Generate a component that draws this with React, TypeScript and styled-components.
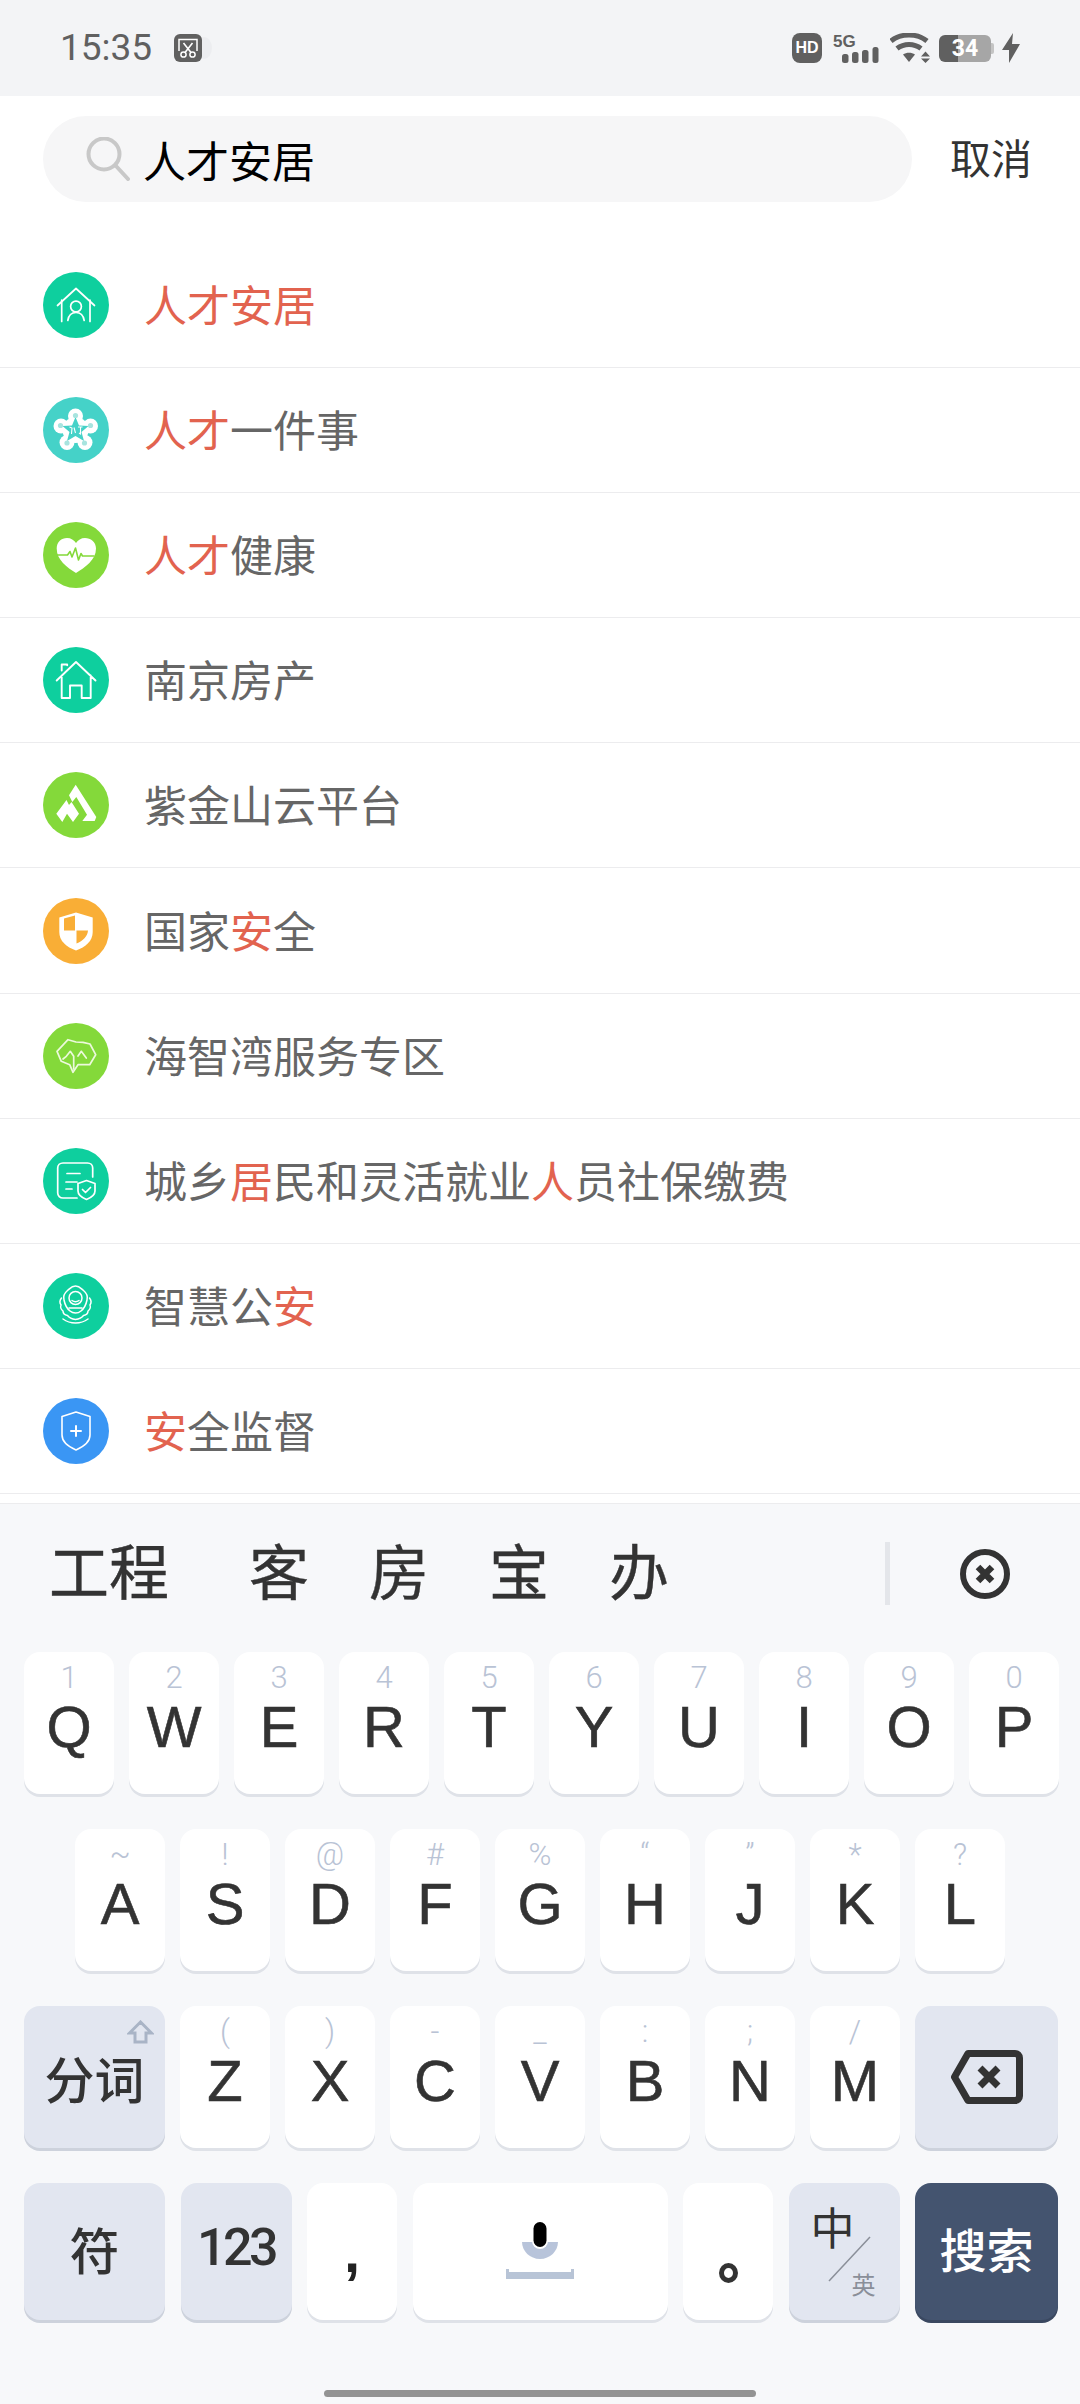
import React from 'react';
import styled, {createGlobalStyle} from 'styled-components';

const CJK = '"Noto Sans CJK SC", "Noto Sans", sans-serif';
const LATIN = '"Liberation Sans", "Noto Sans CJK SC", sans-serif';

const GlobalStyle = createGlobalStyle`
  html, body {
    margin: 0;
    padding: 0;
    background: #fff;
  }

  * {
    box-sizing: border-box;
  }
`;

const Page = styled.div`
  width: 1080px;
  height: 2404px;
  overflow: hidden;
  display: flex;
  flex-direction: column;
  background: #fff;
  font-family: ${CJK};
`;

const StatusBar = styled.div`
  height: 96px;
  flex: none;
  display: flex;
  align-items: center;
  padding: 0 60px;
  background: #f3f4f6;
  color: #606060;
`;

const Time = styled.span`
  font-family: Roboto, sans-serif;
  font-size: 37px;
  line-height: 36px;
  margin-right: 22px;
`;

const StatusRight = styled.div`
  margin-left: auto;
  display: flex;
  align-items: center;
`;

const HdBadge = styled.span`
  width: 30px;
  height: 30px;
  border-radius: 8px;
  background: #606060;
  color: #fff;
  font: bold 16px/30px ${LATIN};
  text-align: center;
  margin-right: 11px;
`;

const Battery = styled.span`
  position: relative;
  width: 52px;
  height: 27px;
  border-radius: 6px;
  margin: 0 11px 0 9px;
  background: linear-gradient(to right, #606060 36%, #a6a6a6 36%);
  color: #fff;
  font: bold 23px/27px Roboto, sans-serif;
  text-align: center;

  &::after {
    content: '';
    position: absolute;
    right: -3px;
    top: 8px;
    width: 3px;
    height: 11px;
    border-radius: 0 2px 2px 0;
    background: #c4c4c4;
  }
`;

const SearchRow = styled.div`
  height: 147px;
  flex: none;
  display: flex;
  align-items: flex-start;
  padding: 20px 48px 0 43px;
`;

const SearchPill = styled.div`
  width: 869px;
  height: 86px;
  border-radius: 43px;
  background: #f6f6f7;
  display: flex;
  align-items: center;
  padding-left: 43px;
`;

const SearchText = styled.span`
  font-size: 43px;
  line-height: 86px;
  color: #000;
  margin-left: 13px;
`;

const Cancel = styled.span`
  margin-left: auto;
  font-size: 41px;
  line-height: 80px;
  color: #333;
`;

const List = styled.div`
  height: 1260px;
  flex: none;
  overflow: hidden;
`;

const Row = styled.div`
  height: 125.1px;
  display: flex;
  align-items: center;
  padding-left: 43px;
  border-bottom: 1px solid #ececee;
`;

const Disc = styled.div<{$bg: string}>`
  width: 66px;
  height: 66px;
  flex: none;
  border-radius: 50%;
  background: ${p => p.$bg};
  margin-right: 35px;

  svg {
    display: block;
  }
`;

const Label = styled.span`
  font-size: 43px;
  line-height: 60px;
  color: #666;
  margin-bottom: 4px;
`;

const Hit = styled.span`
  color: #e2634f;
`;

const Keyboard = styled.div`
  flex: 1;
  background: #f7f8fa;
  border-top: 1px solid #ececee;
  display: flex;
  flex-direction: column;
`;

const Suggestions = styled.div`
  height: 139px;
  flex: none;
  margin-bottom: 9px;
  display: flex;
  align-items: center;
  padding: 0 70px 0 49px;
  color: #333;
  font-size: 60px;
`;

const Candidate = styled.span<{$wide?: boolean}>`
  line-height: 70px;
  margin-right: ${p => (p.$wide ? 80 : 60)}px;
  margin-bottom: 10px;
  -webkit-text-stroke: 0.4px #333;
`;

const Divider = styled.span`
  width: 5px;
  height: 63px;
  background: #e4e6ea;
  margin-left: auto;
  margin-right: 70px;
`;

const KeyRows = styled.div`
  display: flex;
  flex-direction: column;
  gap: 35px;
  padding-left: 24px;
`;

const KeyRow = styled.div<{$indent?: number; $gap?: number}>`
  display: flex;
  gap: ${p => p.$gap ?? 15}px;
  padding-left: ${p => p.$indent ?? 0}px;
`;

type Tone = 'white' | 'gray' | 'dark';

const TONES: Record<Tone, {bg: string; edge: string}> = {
    white: {bg: '#fff', edge: '#dfe2e8'},
    gray: {bg: '#e2e6f0', edge: '#cdd2dc'},
    dark: {bg: '#44546f', edge: '#3a4860'},
};

const Key = styled.div<{$w?: number; $h?: number; $tone?: Tone}>`
  position: relative;
  width: ${p => p.$w ?? 90}px;
  height: ${p => p.$h ?? 142}px;
  flex: none;
  border-radius: 16px;
  background: ${p => TONES[p.$tone ?? 'white'].bg};
  box-shadow: 0 3px 0 ${p => TONES[p.$tone ?? 'white'].edge};
  display: flex;
  flex-direction: column;
  align-items: center;
  color: #333;
`;

const LetterKey = styled(Key)`
  padding-top: 10px;
`;

const Hint = styled.span`
  height: 32px;
  font-family: Roboto, sans-serif;
  font-weight: 300;
  font-size: 31px;
  line-height: 32px;
  color: #b9c3d5;
`;

const Letter = styled.span`
  height: 66px;
  font-family: ${LATIN};
  font-size: 58px;
  line-height: 66px;
  -webkit-text-stroke: 0.6px #333;
`;

const WordKey = styled(Key)`
  justify-content: center;
`;

const WordText = styled.span<{$size?: number; $up?: number; $color?: string}>`
  font-size: ${p => p.$size ?? 50}px;
  font-weight: 500;
  line-height: 60px;
  color: ${p => p.$color ?? '#333'};
  margin-bottom: ${p => p.$up ?? 8}px;
`;

const DigitsText = styled.span`
  font-family: Roboto, sans-serif;
  font-weight: 500;
  font-size: 52px;
  line-height: 60px;
  letter-spacing: -3.5px;
  color: #333;
  margin-bottom: 8px;
`;

const ShiftMark = styled.svg`
  position: absolute;
  top: 14px;
  right: 11px;
`;

const Punct = styled.span`
  font-family: ${LATIN};
  font-weight: bold;
  font-size: 58px;
  line-height: 60px;
  color: #222;
  margin-top: 39px;
`;

const RingMark = styled.span`
  width: 19px;
  height: 20px;
  border: 5px solid #333;
  border-radius: 50%;
  margin-top: 80px;
`;

const ZhMark = styled.span`
  position: absolute;
  left: 22px;
  top: 13px;
  font-size: 44px;
  line-height: 60px;
  color: #333;
`;

const EnMark = styled.span`
  position: absolute;
  left: 63px;
  top: 86px;
  font-size: 24px;
  line-height: 30px;
  color: #8a8f99;
`;

const ZhEnSlash = styled.svg`
  position: absolute;
  left: 38px;
  top: 53px;
`;

const HomeBar = styled.div`
  width: 432px;
  height: 7px;
  flex: none;
  border-radius: 4px;
  background: #939393;
  margin: 70px auto 0;
`;

const W = {fill: 'none', stroke: '#fff', strokeWidth: 1.7, strokeLinecap: 'round', strokeLinejoin: 'round'} as const;

const HouseUser = () => (
    <svg width="66" height="66" viewBox="0 0 66 66">
        <g {...W}>
            <path d="M14.5 33.5L33 16.5l18.5 17" />
            <path d="M18.7 28v21.5M47 28v21.5" />
            <circle cx="33" cy="34.5" r="5.4" />
            <path d="M24.8 48.5c.8-5 4-8 8.2-8s7.4 3 8.2 8" />
        </g>
    </svg>
);

const Blossom = () => (
    <svg width="66" height="66" viewBox="0 0 66 66">
        <g fill="#fff">
            <circle cx="32.500" cy="19" r="7.500" />
            <circle cx="18" cy="29" r="7.500" />
            <circle cx="47.500" cy="29" r="7.500" />
            <circle cx="24" cy="45.500" r="7.500" />
            <circle cx="42" cy="45.500" r="7.500" />
            <circle cx="32.500" cy="33" r="13" />
        </g>
        <path fill="#45d2c8" d="M32.500 20l3.500 8.500 9.500.5-7 6 2.500 9-8.500-5-8.500 5 2.500-9-7-6 9.500-.5z" />
        <path fill="none" stroke="#fff" strokeWidth="1.100" d="M26.500 30l2.500 1-.5 6M31 30.500l1.500 5.500M35 30h4.500M37.500 30v7l-1.500-1" />
        <g fill="#a8e4df">
            <circle cx="32.500" cy="18.500" r="2.600" />
            <circle cx="17.500" cy="28.500" r="2.600" />
            <circle cx="47.500" cy="28.500" r="2.600" />
            <circle cx="24" cy="46" r="2.600" />
            <circle cx="41.500" cy="46" r="2.600" />
        </g>
    </svg>
);

const HeartPulse = () => (
    <svg width="66" height="66" viewBox="0 0 66 66">
        <path
            fill="#fff"
            d="M33 51C24 45.500 13.700 38 13.700 26.500 13.700 20 18.500 16 24 16c4 0 7 2 9 5 2-3 5-5 9-5 5.500 0 11 4 11 10.500C53 38 42 45.500 33 51z"
        />
        <path
            fill="none"
            stroke="#84d93a"
            strokeWidth="1.600"
            strokeLinejoin="round"
            d="M14 33h10.500l2.500-3.500 2 5.500 3.500-9 3 12 2.500-6.500 1.500 2.500h12"
        />
    </svg>
);

const HouseOutline = () => (
    <svg width="66" height="66" viewBox="0 0 66 66">
        <path
            {...W}
            strokeWidth="1.900"
            d="M13.700 33.500L33 15l19.500 18.500M18.700 28.500V51H27V38.500h11.700V51h9V28.500M18.700 23.500v-6h5.500v.8"
        />
    </svg>
);

const Mountain = () => (
    <svg width="66" height="66" viewBox="0 0 66 66">
        <path fill="#fff" d="M32.700 12.700L53.300 45l-1.600 4H39.300l4.700-6.300L33.300 25l-4 5-3.300-6.700z" />
        <path fill="#fff" d="M23.500 28l-10.200 13.700 6 8.300 4.700-8.300 6 8.300 6-8.300-7.500-11.700-2.500 3z" />
    </svg>
);

const CheckerShield = () => (
    <svg width="66" height="66" viewBox="0 0 66 66">
        <path fill="#fff" d="M33 14.500l16.700 5V34c0 9-7 15-16.700 18.500C23.300 49 16.300 43 16.300 34V19.500z" />
        <path fill="#f9ae36" d="M21 20.500l11-3v15H21zM33.500 32.500H45c-.5 6-5 10.500-11.500 13z" />
    </svg>
);

const Brain = () => (
    <svg width="66" height="66" viewBox="0 0 66 66">
        <g {...W} strokeWidth="1.700" stroke="#ecf9dc">
            <path d="M14 28.300L25 16.700l8 2.300 7 .3 7 1.700 5.700 10.700-6 10H35l-5 7.600-3.300-7.600-8.400-3.400z" />
            <path d="M20 36l3.300-2.700 4-5 3.400 5V46M35 33l3.300-4.700 5 6.700" />
        </g>
    </svg>
);

const DocShield = () => (
    <svg width="66" height="66" viewBox="0 0 66 66">
        <g {...W}>
            <path d="M34 50H20c-3 0-5.300-2.300-5.300-5V20c0-3 2.300-5 5.300-5h24.500c3 0 5.200 2 5.200 5v9" />
            <path d="M24 25.500h13M23 34h11M23 41h6" />
            <path d="M43.500 32.500l8.500 3v7.500c0 4-3.500 6.500-8.500 8.500-5-2-8.500-4.500-8.500-8.500v-7.500z" />
            <path d="M39.500 41.500l3 3 5-5" />
        </g>
    </svg>
);

const PoliceBadge = () => (
    <svg width="66" height="66" viewBox="0 0 66 66">
        <g {...W} strokeWidth="1.500">
            <path d="M32.500 13c4 0 5.500 2.500 8 4.500 3 2.500 4.500 6 3.500 9.500-1 5-3.500 9-6 11-1.800 1.500-3.500 2-5.500 2s-3.700-.5-5.500-2c-2.500-2-5-6-6-11-1-3.500.5-7 3.500-9.500 2.500-2 4-4.500 8-4.500z" />
            <circle cx="32.500" cy="25" r="6.500" />
            <path d="M29 27.500c2 1.500 5 1.500 7 0M26 35h13" />
            <path d="M18.500 25c-2.500 3-1.500 5.500-.5 7-1 2.500.5 5 2 6 0 2.500 2 4 4.500 4.500 1.500 2 4 3.500 8 4M46.500 25c2.500 3 1.500 5.500.5 7 1 2.500-.5 5-2 6 0 2.500-2 4-4.500 4.500-1.500 2-4 3.500-8 4" />
            <path d="M20 46c4 3 8.500 4 12.500 4S41 49 45 46" />
        </g>
    </svg>
);

const PlusShield = () => (
    <svg width="66" height="66" viewBox="0 0 66 66">
        <g {...W} strokeWidth="1.600">
            <path d="M33 14l14 4.500V37c0 7-6 11.500-14 15-8-3.500-14-8-14-15V18.500z" />
        </g>
        <path {...W} strokeWidth="2" d="M28 33h10M33 28v10" />
    </svg>
);

const Magnifier = () => (
    <svg width="44" height="44" viewBox="0 0 44 44" fill="none" stroke="#c8c8c8" strokeWidth="4" strokeLinecap="round">
        <circle cx="18" cy="17" r="15.500" />
        <path d="M30 29l12 13" />
    </svg>
);

const ScissorsBadge = () => (
    <svg width="40" height="28" viewBox="0 0 40 28" style={{display: 'block'}}>
        <ellipse cx="30" cy="14" rx="8" ry="11" fill="#ecedf0" />
        <rect width="28" height="28" rx="6" fill="#606060" />
        <path d="M5 17V5.500h18V17" fill="none" stroke="#fff" strokeWidth="1.500" />
        <path d="M9.500 9l7.500 9.500M18.500 9L11 18.500" stroke="#fff" strokeWidth="1.600" />
        <circle cx="9.500" cy="20.500" r="2.600" fill="none" stroke="#fff" strokeWidth="1.500" />
        <circle cx="18.500" cy="20.500" r="2.600" fill="none" stroke="#fff" strokeWidth="1.500" />
    </svg>
);

const FiveG = () => (
    <svg width="46" height="30" viewBox="0 0 46 30" style={{marginRight: 11}}>
        <text x="0" y="14" fontFamily="Liberation Sans, sans-serif" fontWeight="bold" fontSize="17" fill="#606060">
            5G
        </text>
        <rect x="9" y="21" width="6.500" height="9" rx="2.500" fill="#606060" />
        <rect x="19" y="19" width="6.500" height="11" rx="2.500" fill="#606060" />
        <rect x="29" y="17" width="6.500" height="13" rx="2.500" fill="#606060" />
        <rect x="39.500" y="14" width="6" height="16" rx="2.500" fill="#606060" />
    </svg>
);

const Wifi = () => (
    <svg width="40" height="30" viewBox="0 0 40 30">
        <path d="M1 8c10-8 26-8 36 0" fill="none" stroke="#606060" strokeWidth="5" />
        <path d="M7 15.500c7-5.500 17-5.500 24 0" fill="none" stroke="#606060" strokeWidth="5" />
        <path d="M13 21.500c3.500-2.500 8.500-2.500 12 0L19 29z" fill="#606060" />
        <path d="M31 23.500l4.500-5 4.500 5zM31 25.500h9l-4.500 4.500z" fill="#606060" />
    </svg>
);

const Bolt = () => (
    <svg width="18" height="30" viewBox="0 0 18 30">
        <path d="M11 0L0 17h7v13l11-19h-8z" fill="#606060" />
    </svg>
);

const ClearCircle = () => (
    <svg width="50" height="50" viewBox="0 0 50 50" fill="none" stroke="#333" strokeWidth="6">
        <circle cx="25" cy="25" r="22" />
        <path d="M18 18l14 14M32 18L18 32" strokeWidth="6.500" />
    </svg>
);

const ShiftArrow = () => (
    <ShiftMark width="27" height="24" viewBox="0 0 27 24" fill="none" stroke="#a9b4c6" strokeWidth="3">
        <path d="M13.500 2L2.500 13H8v9h11v-9h5.500z" />
    </ShiftMark>
);

const Backspace = () => (
    <svg width="72" height="54" viewBox="0 0 72 54">
        <path
            d="M17 3.500h47c2.500 0 4.500 2 4.500 4.500v38c0 2.500-2 4.500-4.500 4.500H17L3.500 27z"
            fill="none"
            stroke="#333"
            strokeWidth="7"
            strokeLinejoin="round"
        />
        <path d="M29 18l18 18M47 18L29 36" stroke="#333" strokeWidth="7" />
    </svg>
);

const SpaceMic = () => (
    <svg width="68" height="57" viewBox="0 0 68 57" style={{marginBottom: 3}}>
        <path d="M16 20h36c0 9-8 17-18 17s-18-8-18-17z" fill="#b8c4da" />
        <rect x="26" y="-2" width="16" height="29" rx="8" fill="#fff" />
        <rect x="27.500" y="0" width="13" height="25" rx="6.500" fill="#000" />
        <path d="M0 47h3v3h62v-3h3v10H0z" fill="#b8c4d6" />
    </svg>
);

type Entry = {
    bg: string;
    icon: React.ReactNode;
    label: React.ReactNode;
};

const ENTRIES: Entry[] = [
    {bg: '#0ecf9e', icon: <HouseUser />, label: <Hit>人才安居</Hit>},
    {bg: '#45d2c8', icon: <Blossom />, label: <><Hit>人才</Hit>一件事</>},
    {bg: '#84d93a', icon: <HeartPulse />, label: <><Hit>人才</Hit>健康</>},
    {bg: '#0ecf9e', icon: <HouseOutline />, label: '南京房产'},
    {bg: '#84d93a', icon: <Mountain />, label: '紫金山云平台'},
    {bg: '#f9ae36', icon: <CheckerShield />, label: <>国家<Hit>安</Hit>全</>},
    {bg: '#84d93a', icon: <Brain />, label: '海智湾服务专区'},
    {bg: '#0ecf9e', icon: <DocShield />, label: <>城乡<Hit>居</Hit>民和灵活就业<Hit>人</Hit>员社保缴费</>},
    {bg: '#0ecf9e', icon: <PoliceBadge />, label: <>智慧公<Hit>安</Hit></>},
    {bg: '#3a96f4', icon: <PlusShield />, label: <><Hit>安</Hit>全监督</>},
];

const ROW_ONE = [['1', 'Q'], ['2', 'W'], ['3', 'E'], ['4', 'R'], ['5', 'T'], ['6', 'Y'], ['7', 'U'], ['8', 'I'], ['9', 'O'], ['0', 'P']];
const ROW_TWO = [['~', 'A'], ['!', 'S'], ['@', 'D'], ['#', 'F'], ['%', 'G'], ['“', 'H'], ['”', 'J'], ['*', 'K'], ['?', 'L']];
const ROW_THREE = [['(', 'Z'], [')', 'X'], ['-', 'C'], ['_', 'V'], [':', 'B'], [';', 'N'], ['/', 'M']];

const renderLetters = (keys: string[][]) =>
    keys.map(([hint, letter]) => (
        <LetterKey key={letter}>
            <Hint>{hint}</Hint>
            <Letter>{letter}</Letter>
        </LetterKey>
    ));

const App = () => {
    return (
        <Page>
            <GlobalStyle />
            <StatusBar>
                <Time>15:35</Time>
                <ScissorsBadge />
                <StatusRight>
                    <HdBadge>HD</HdBadge>
                    <FiveG />
                    <Wifi />
                    <Battery>34</Battery>
                    <Bolt />
                </StatusRight>
            </StatusBar>
            <SearchRow>
                <SearchPill>
                    <Magnifier />
                    <SearchText>人才安居</SearchText>
                </SearchPill>
                <Cancel>取消</Cancel>
            </SearchRow>
            <List>
                {ENTRIES.map((entry, i) => (
                    <Row key={i}>
                        <Disc $bg={entry.bg}>{entry.icon}</Disc>
                        <Label>{entry.label}</Label>
                    </Row>
                ))}
            </List>
            <Keyboard>
                <Suggestions>
                    <Candidate $wide>工程</Candidate>
                    <Candidate>客</Candidate>
                    <Candidate>房</Candidate>
                    <Candidate>宝</Candidate>
                    <Candidate>办</Candidate>
                    <Divider />
                    <ClearCircle />
                </Suggestions>
                <KeyRows>
                    <KeyRow>{renderLetters(ROW_ONE)}</KeyRow>
                    <KeyRow $indent={51}>{renderLetters(ROW_TWO)}</KeyRow>
                    <KeyRow>
                        <WordKey $w={141} $tone="gray">
                            <ShiftArrow />
                            <WordText $up={0}>分词</WordText>
                        </WordKey>
                        {renderLetters(ROW_THREE)}
                        <WordKey $w={143} $tone="gray">
                            <Backspace />
                        </WordKey>
                    </KeyRow>
                    <KeyRow $gap={15.5}>
                        <WordKey $w={141} $h={137} $tone="gray">
                            <WordText>符</WordText>
                        </WordKey>
                        <WordKey $w={111} $h={137} $tone="gray">
                            <DigitsText>123</DigitsText>
                        </WordKey>
                        <Key $h={137}>
                            <Punct>,</Punct>
                        </Key>
                        <WordKey $w={255} $h={137}>
                            <SpaceMic />
                        </WordKey>
                        <Key $h={137}>
                            <RingMark />
                        </Key>
                        <Key $w={111} $h={137} $tone="gray">
                            <ZhMark>中</ZhMark>
                            <ZhEnSlash width="44" height="46" viewBox="0 0 44 46">
                                <path d="M43 1L2 45" stroke="#8a8f99" strokeWidth="1.500" />
                            </ZhEnSlash>
                            <EnMark>英</EnMark>
                        </Key>
                        <WordKey $w={143} $h={137} $tone="dark">
                            <WordText $size={47} $color="#fff">搜索</WordText>
                        </WordKey>
                    </KeyRow>
                </KeyRows>
                <HomeBar />
            </Keyboard>
        </Page>
    );
};

export default App;
